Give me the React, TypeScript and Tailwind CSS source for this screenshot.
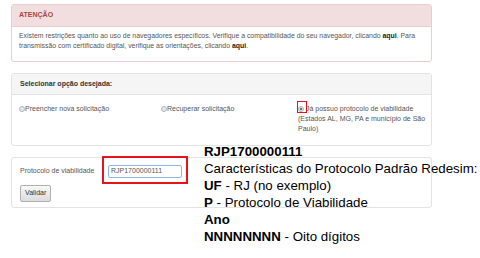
import React from "react";

function Radio({ checked = false }: { checked?: boolean }) {
  return (
    <span className="inline-block w-[6px] h-[6px] rounded-full border border-[#b5b5b5] bg-[#e8e8e8] align-[-0.5px] relative">
      {checked && <span className="absolute left-[1px] top-[1px] w-[2px] h-[2px] rounded-full bg-[#444]" />}
    </span>
  );
}

export default function App() {
  return (
    <div className="relative w-[480px] h-[258px] bg-white overflow-hidden text-[#444]" style={{ fontFamily: '"Liberation Sans", Arial, sans-serif' }}>
      <div className="pt-[4px] px-[11px]">
        {/* Alert panel */}
        <div className="w-[421px] h-[58px] border border-[#ebccd1] rounded-[3px]">
          <div className="h-[22px] bg-[#f2dede] border-b border-[#ebccd1] px-[7px] flex items-center text-[7px] font-bold text-[#a94442]">
            ATENÇÃO
          </div>
          <div className="px-[7px] pt-[4px] text-[6.9px] leading-[9.5px] text-[#555]">
            Existem restrições quanto ao uso de navegadores específicos. Verifique a compatibilidade do seu navegador, clicando <b className="text-[#222]">aqui</b>. Para transmissão com certificado digital, verifique as orientações, clicando <b className="text-[#222]">aqui</b>.
          </div>
        </div>

        {/* Options panel */}
        <div className="mt-[11px] w-[421px] h-[73px] border border-[#e3e3e3] rounded-[3px]">
          <div className="h-[21px] bg-[#f5f5f5] border-b border-[#e3e3e3] px-[8px] flex items-center text-[7px] font-bold text-[#333]">
            Selecionar opção desejada:
          </div>
          <div className="flex pl-[7px] pt-[9px] text-[7px] leading-[10px] text-[#555]">
            <div className="w-[142px]"><Radio />Preencher nova solicitação</div>
            <div className="w-[137px]"><Radio />Recuperar solicitação</div>
            <div className="w-[130px]"><Radio checked /> Já possuo protocolo de viabilidade (Estados AL, MG, PA e município de São Paulo)</div>
          </div>
        </div>

        {/* Protocol panel */}
        <div className="mt-[11px] w-[421px] h-[51px] border border-[#e3e3e3] rounded-[3px] px-[8px] pt-[7px]">
          <div className="flex items-center">
            <span className="w-[88px] text-[7px] text-[#555]">Protocolo de viabilidade</span>
            <div className="w-[74px] h-[13px] border border-[#8fb6e6] rounded-[2px] px-[2px] flex items-center text-[7px] text-[#555]">
              RJP1700000111
            </div>
          </div>
          <button className="mt-[2px] h-[17px] px-[4px] border border-[#b0b0b0] rounded-[2px] bg-gradient-to-b from-[#f8f8f8] to-[#dcdcdc] text-[7px] text-[#333]">
            Validar
          </button>
        </div>
      </div>

      {/* Annotations */}
      <div className="absolute left-[297px] top-[101px] w-[10px] h-[12px] border-[1.5px] border-[#e8141c]" />
      <div className="absolute left-[102px] top-[156px] w-[86px] h-[28px] border-2 border-[#e8141c]" />
      <div className="absolute left-[204px] top-[143px] text-[13.3px] leading-[17px] text-black whitespace-nowrap">
        <div className="font-bold">RJP1700000111</div>
        <div>Características do Protocolo Padrão Redesim:</div>
        <div><b>UF</b> - RJ (no exemplo)</div>
        <div><b>P</b> - Protocolo de Viabilidade</div>
        <div className="font-bold">Ano</div>
        <div><b>NNNNNNNN</b> - Oito dígitos</div>
      </div>
    </div>
  );
}
